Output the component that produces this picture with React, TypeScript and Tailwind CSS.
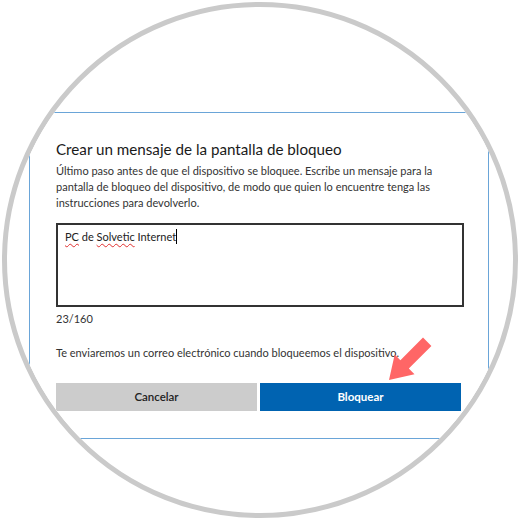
import React from 'react';

const Arrow = () => (
  <svg width="50" height="46" viewBox="0 0 50 46" className="absolute left-[386px] top-[337px]">
    <path d="M3 43 L8.7 17.5 L14.4 23.2 L37 0.6 L45.4 9 L22.8 31.6 L28.5 37.3 Z" fill="#ff6666" />
  </svg>
);

const App = () => {
  return (
    <div className="w-[520px] h-[520px] bg-white flex items-center justify-center relative font-['Lato',sans-serif]">
      <div className="w-[516px] h-[516px] rounded-full border-[5px] border-[#cacaca] overflow-hidden bg-white pl-[22px] pt-[105px]">
        <div className="w-[460px] h-[327px] border border-[#6aa5d8] bg-white pl-[26px] pr-[20px] pt-[25px]">
          <h1 className="text-[15.2px] text-[#1a1a1a] leading-[22px]">Crear un mensaje de la pantalla de bloqueo</h1>
          <p className="mt-[3px] text-[11px] leading-[16px] text-[#333]">
            Último paso antes de que el dispositivo se bloquee. Escribe un mensaje para la
            <br />
            pantalla de bloqueo del dispositivo, de modo que quien lo encuentre tenga las
            <br />
            instrucciones para devolverlo.
          </p>
          <div className="mt-[12px] w-[408px] h-[84px] border-2 border-[#333] px-[7px] pt-[4px] text-[11px] text-[#222] leading-[16px] flex items-start">
            <span className="underline decoration-wavy decoration-[#e03030] decoration-1 underline-offset-2">PC</span>
            <span>&nbsp;de&nbsp;</span>
            <span className="underline decoration-wavy decoration-[#e03030] decoration-1 underline-offset-2">Solvetic</span>
            <span>&nbsp;Internet</span>
            <span className="w-px h-[15px] bg-black"></span>
          </div>
          <div className="mt-[4px] text-[11px] leading-[16px] text-[#333]">23/160</div>
          <div className="mt-[18px] text-[11px] leading-[16px] text-[#333]">
            Te enviaremos un correo electrónico cuando bloqueemos el dispositivo.
          </div>
          <div className="mt-[22px] flex gap-[3px] w-[405px]">
            <button className="flex-1 h-[28px] bg-[#cccccc] text-[11.5px] text-[#222] font-semibold">Cancelar</button>
            <button className="flex-1 h-[28px] bg-[#0063b1] text-[11.5px] text-white font-bold">Bloquear</button>
          </div>
        </div>
      </div>
      <Arrow />
    </div>
  );
};

export default App;
